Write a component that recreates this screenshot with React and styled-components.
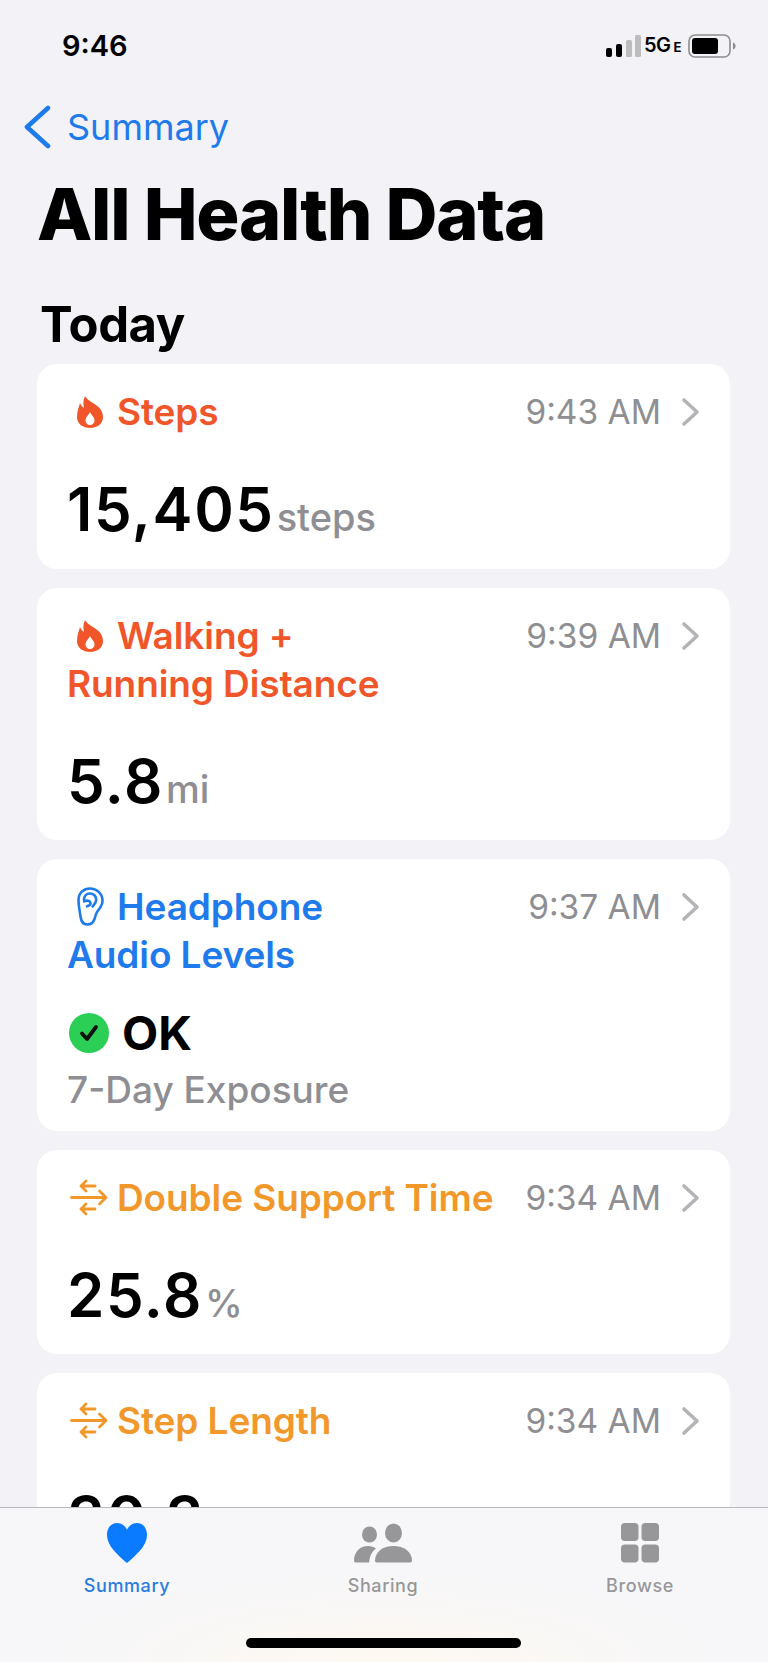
import React from 'react';
import styled, { createGlobalStyle } from 'styled-components';

const GlobalStyle = createGlobalStyle`
  html, body {
    margin: 0;
    padding: 0;
    background: #f2f2f7;
  }
  * {
    box-sizing: border-box;
  }
`;

const Screen = styled.div`
  width: 768px;
  height: 1662px;
  display: flex;
  flex-direction: column;
  overflow: hidden;
  background: #f2f2f7;
  font-family: Inter, "Liberation Sans", sans-serif;
  color: #000;
`;

const StatusBar = styled.div`
  height: 92px;
  flex-shrink: 0;
  padding: 26px 32px 0 62px;
  display: flex;
  justify-content: space-between;
  align-items: flex-start;
`;

const Clock = styled.div`
  font-size: 29px;
  line-height: 40px;
  font-weight: 600;
`;

const StatusIcons = styled.div`
  display: flex;
  align-items: center;
  gap: 4px;
  height: 40px;
`;

const NetworkLabel = styled.span`
  font-size: 20px;
  font-weight: 600;
  letter-spacing: -0.5px;
  line-height: 24px;
  margin: 0 3px 0 -2px;
`;

const NetworkSuffix = styled.span`
  font-size: 13px;
  font-weight: 700;
  margin-left: 3px;
`;

const NavBar = styled.div`
  height: 70px;
  flex-shrink: 0;
  padding: 0 0 0 23px;
  display: flex;
  align-items: center;
  gap: 16px;
  color: #1f7aec;
  font-size: 36px;
`;

const PageTitle = styled.h1`
  margin: 0;
  padding: 12px 0 0 37px;
  height: 90px;
  flex-shrink: 0;
  font-size: 72px;
  line-height: 80px;
  font-weight: 800;
  letter-spacing: -1.3px;
`;

const SectionTitle = styled.h2`
  margin: 0;
  padding: 43px 0 0 40px;
  height: 112px;
  flex-shrink: 0;
  font-size: 49px;
  line-height: 60px;
  font-weight: 700;
  letter-spacing: -0.4px;
`;

const CardList = styled.div`
  flex: 1;
  min-height: 0;
  overflow: hidden;
  padding: 0 38px 0 37px;
  display: flex;
  flex-direction: column;
  gap: 19px;
`;

const Card = styled.div`
  flex-shrink: 0;
  background: #fff;
  border-radius: 20px;
  padding: 24px 30px 24px 30px;
  height: ${(p) => p.$height}px;
`;

const CardHead = styled.div`
  display: flex;
  justify-content: space-between;
  align-items: flex-start;
`;

const CardTitle = styled.div`
  font-size: 37px;
  line-height: 48px;
  font-weight: 600;
  letter-spacing: -0.1px;
  color: ${(p) => p.$color};
`;

const IconSlot = styled.span`
  display: inline-flex;
  justify-content: center;
  align-items: center;
  width: 50px;
  height: 40px;
  margin: -10px 0;
  vertical-align: middle;
`;

const Glyph = styled.svg`
  display: block;
  margin-right: ${(p) => p.$nudgeX || 0}px;
  margin-bottom: 6px;
`;

const CardTime = styled.div`
  display: flex;
  align-items: center;
  gap: 20px;
  font-size: 33.5px;
  line-height: 48px;
  color: #8e8e93;
  white-space: nowrap;
`;

const Reading = styled.div`
  display: flex;
  align-items: baseline;
  gap: 2px;
  margin-top: ${(p) => p.$top}px;
  font-size: 60px;
  line-height: 70px;
  font-weight: 600;
  letter-spacing: 1.6px;
`;

const Unit = styled.span`
  font-size: 38px;
  font-weight: 500;
  letter-spacing: 0;
  color: #8e8e93;
`;

const StatusLine = styled.div`
  display: flex;
  align-items: center;
  gap: 13px;
  margin: 26px 0 0 2px;
  font-size: 47px;
  line-height: 56px;
  font-weight: 700;
`;

const Note = styled.div`
  font-size: 37px;
  line-height: 50px;
  font-weight: 500;
  color: #8e8e93;
  margin-top: 4px;
`;

const TabBar = styled.div`
  position: relative;
  height: 155px;
  flex-shrink: 0;
  border-top: 1px solid #b9b9bd;
  background: radial-gradient(ellipse 340px 90px at 50% 100%, #fdf8f1 0%, #f7f7f9 100%);
  display: grid;
  grid-template-columns: 254px 258px 256px;
`;

const Tab = styled.div`
  display: flex;
  flex-direction: column;
  align-items: center;
  padding-top: 15px;
  color: ${(p) => (p.$active ? '#2a7bde' : '#979799')};
  font-size: 18px;
  line-height: 24px;
  font-weight: 500;
  letter-spacing: 0.6px;
`;

const TabIcon = styled.svg`
  display: block;
  margin-bottom: 11px;
`;

const HomeIndicator = styled.div`
  position: absolute;
  left: 246px;
  bottom: 14px;
  width: 275px;
  height: 10px;
  border-radius: 5px;
  background: #000;
`;

const SignalIcon = () => (
  <svg width="36" height="22" viewBox="0 0 36 22">
    <rect x="0" y="13" width="6" height="9" rx="2" fill="#000" />
    <rect x="10" y="9" width="6" height="13" rx="2" fill="#000" />
    <rect x="20" y="5" width="6" height="17" rx="1.5" fill="#bdbdc0" />
    <rect x="29" y="0" width="6" height="22" rx="1.5" fill="#bdbdc0" />
  </svg>
);

const BatteryIcon = () => (
  <svg width="48" height="24" viewBox="0 0 48 24">
    <rect x="1" y="1" width="41" height="22" rx="6" fill="none" stroke="#8d8d90" strokeWidth="1.6" />
    <rect x="4" y="4" width="26" height="16" rx="3" fill="#000" />
    <path d="M45 8.5c1.8.6 2.6 2 2.6 3.5s-.8 2.9-2.6 3.5z" fill="#8d8d90" />
  </svg>
);

const BackChevron = () => (
  <svg width="28" height="44" viewBox="0 0 28 44">
    <path d="M25 3 L4 22 L25 41" fill="none" stroke="#1f7aec" strokeWidth="4.6" strokeLinecap="round" strokeLinejoin="round" />
  </svg>
);

const RowChevron = () => (
  <svg width="19" height="30" viewBox="0 0 19 30">
    <path d="M3 3 L16 15 L3 27" fill="none" stroke="#b4b4b8" strokeWidth="3.6" strokeLinecap="round" strokeLinejoin="round" />
  </svg>
);

const FlameIcon = () => (
  <IconSlot>
    <Glyph $nudgeX={5} width="26" height="32" viewBox="0 0 26 32">
      <path
        fillRule="evenodd"
        fill="#f0562a"
        d="M8 0C10 4 15 6 19 9 23.500 12 26 16 26 21 26 28 20 32 13 32 6 32 0 28 0 21 0 15 2 11 3 7 4 9 5 11 7 12 6 8 6 4 8 0zM13 16C12 19 8.500 21 8.500 24.500 8.500 27 10.500 29 13 29S17.500 27 17.500 24.500C17.500 21 14 19 13 16z"
      />
    </Glyph>
  </IconSlot>
);

const EarIcon = () => (
  <IconSlot>
    <Glyph $nudgeX={5} width="28" height="39" viewBox="0 0 28 39">
      <g fill="none" stroke="#1f7aec" strokeWidth="2.600" strokeLinecap="round" strokeLinejoin="round">
        <path d="M2.500 13C2.500 6 7.500 1.500 14 1.500S26.500 6.500 26.500 13.500c0 5-2.500 7.500-4.800 10.500-2 2.700-2.200 5-3.200 8-1 3-3.500 5.500-7 5.500-4.500 0-6.500-3.500-7-8C3.800 24 2.500 19 2.500 13z" />
        <path d="M8 13c0-4 2.600-6.500 6-6.500s6.200 2.600 6.200 6.300c0 3-2.200 4.700-3.600 6.700" />
        <path d="M8.200 14.500c2.500-1.500 6-1 6.300 1.500.2 2-1.600 2.800-3.500 3.300" />
      </g>
    </Glyph>
  </IconSlot>
);

const ArrowsIcon = () => (
  <IconSlot>
    <Glyph $nudgeX={7} width="38" height="37" viewBox="0 0 38 37">
      <g fill="none" stroke="#f2982a" strokeWidth="2.800" strokeLinecap="round" strokeLinejoin="round">
        <path d="M25 7H11M16 2l-5 5 5 5" />
        <path d="M1.500 18.500H36M29.500 12l6.500 6.500-6.500 6.500" />
        <path d="M25 30H11M16 25l-5 5 5 5" />
      </g>
    </Glyph>
  </IconSlot>
);

const CheckBadge = () => (
  <svg width="40" height="40" viewBox="0 0 40 40">
    <circle cx="20" cy="20" r="20" fill="#2bcf55" />
    <path d="M13 20.500l5 5.500 9-12" fill="none" stroke="#111" strokeWidth="3.800" strokeLinecap="round" strokeLinejoin="round" />
  </svg>
);

const TIME_CHEVRON = <RowChevron />;

export default function App() {
  return (
    <Screen>
      <GlobalStyle />
      <StatusBar>
        <Clock>9:46</Clock>
        <StatusIcons>
          <SignalIcon />
          <NetworkLabel>
            5G<NetworkSuffix>E</NetworkSuffix>
          </NetworkLabel>
          <BatteryIcon />
        </StatusIcons>
      </StatusBar>

      <NavBar>
        <BackChevron />
        Summary
      </NavBar>
      <PageTitle>All Health Data</PageTitle>
      <SectionTitle>Today</SectionTitle>

      <CardList>
        <Card $height={205}>
          <CardHead>
            <CardTitle $color="#f0562a">
              <FlameIcon />
              Steps
            </CardTitle>
            <CardTime>9:43 AM {TIME_CHEVRON}</CardTime>
          </CardHead>
          <Reading $top={38}>
            15,405<Unit>steps</Unit>
          </Reading>
        </Card>

        <Card $height={252}>
          <CardHead>
            <CardTitle $color="#f0562a">
              <FlameIcon />
              Walking +
              <br />
              Running Distance
            </CardTitle>
            <CardTime>9:39 AM {TIME_CHEVRON}</CardTime>
          </CardHead>
          <Reading $top={38}>
            5.8<Unit>mi</Unit>
          </Reading>
        </Card>

        <Card $height={272}>
          <CardHead>
            <CardTitle $color="#1f7aec">
              <EarIcon />
              Headphone
              <br />
              Audio Levels
            </CardTitle>
            <CardTime>9:37 AM {TIME_CHEVRON}</CardTime>
          </CardHead>
          <StatusLine>
            <CheckBadge />
            OK
          </StatusLine>
          <Note>7-Day Exposure</Note>
        </Card>

        <Card $height={204}>
          <CardHead>
            <CardTitle $color="#f2982a">
              <ArrowsIcon />
              Double Support Time
            </CardTitle>
            <CardTime>9:34 AM {TIME_CHEVRON}</CardTime>
          </CardHead>
          <Reading $top={38}>
            25.8<Unit>%</Unit>
          </Reading>
        </Card>

        <Card $height={204}>
          <CardHead>
            <CardTitle $color="#f2982a">
              <ArrowsIcon />
              Step Length
            </CardTitle>
            <CardTime>9:34 AM {TIME_CHEVRON}</CardTime>
          </CardHead>
          <Reading $top={38}>
            30.3<Unit>in</Unit>
          </Reading>
        </Card>
      </CardList>

      <TabBar>
        <Tab $active>
          <TabIcon width="42" height="40" viewBox="0 0 44 42">
            <path
              fill="#0a7aff"
              d="M22 42C12 33 1 24 1 12.500 1 5 5.500 0 11.500 0 16 0 19.800 2.500 22 7 24.200 2.500 28 0 32.500 0 38.500 0 43 5 43 12.500 43 24 32 33 22 42z"
            />
          </TabIcon>
          Summary
        </Tab>
        <Tab>
          <TabIcon width="58" height="40" viewBox="0 0 58 40">
            <g fill="#979799">
              <ellipse cx="15.500" cy="11.500" rx="7.500" ry="8" />
              <ellipse cx="39.500" cy="10" rx="8.500" ry="9.500" />
              <path d="M2 39.500C0.500 39.500 0 38.500 0 37.500 0 29 6 23 14 23c3 0 6 1 8 2.500-4 3-6.500 7.500-6.800 14z" />
              <path d="M23 39.500c-1.500 0-2-1-2-2C21 29 29 23 39.500 23S58 29 58 37.500c0 1-.5 2-2 2z" />
            </g>
          </TabIcon>
          Sharing
        </Tab>
        <Tab>
          <TabIcon width="38" height="40" viewBox="0 0 38 40">
            <g fill="#979799">
              <rect x="0" y="0" width="17.500" height="18" rx="4" />
              <rect x="20.500" y="0" width="17.500" height="18" rx="4" />
              <rect x="0" y="21.500" width="17.500" height="18" rx="4" />
              <rect x="20.500" y="21.500" width="17.500" height="18" rx="4" />
            </g>
          </TabIcon>
          Browse
        </Tab>
        <HomeIndicator />
      </TabBar>
    </Screen>
  );
}
